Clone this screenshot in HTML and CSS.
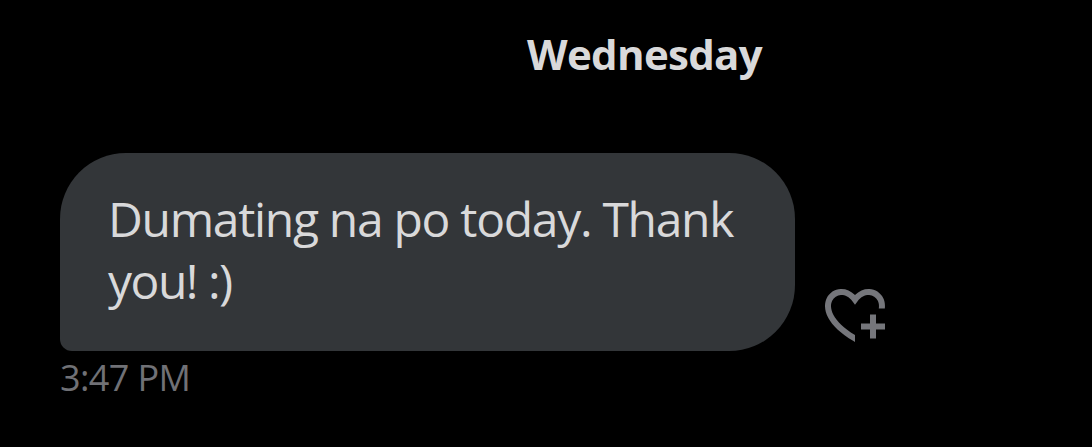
FILE: index.html
```html
<!DOCTYPE html>
<html lang="fil">
<head>
    <meta charset="UTF-8">
    <meta name="viewport" content="width=device-width, initial-scale=1.0">
    <title>Messages</title>
    <link rel="stylesheet" href="styles.css">
</head>
<body>
    <main class="conversation">
        <h2 class="day">Wednesday</h2>
        <div class="message-row">
            <div class="bubble">
                <p class="message">Dumating na po today. Thank<br><span class="ending">you! :)</span></p>
            </div>
            <button class="react" aria-label="Add reaction">
                <svg viewBox="2 3.5 20 18" width="60" height="54" fill="currentColor">
                    <path d="M17 12v3h-2.998v2h3v3h2v-3h3v-2h-3.001v-3H17zm-5 6.839c-3.871-2.34-6.053-4.639-7.127-6.609-1.112-2.04-1.031-3.7-.479-4.82.561-1.13 1.667-1.84 2.91-1.91 1.222-.06 2.68.51 3.892 2.16l.806 1.09.805-1.09c1.211-1.65 2.668-2.22 3.89-2.16 1.242.07 2.347.78 2.908 1.91.334.677.49 1.554.321 2.59h2.011c.153-1.283-.039-2.469-.539-3.48-.887-1.79-2.647-2.91-4.601-3.01-1.65-.09-3.367.56-4.796 2.01-1.43-1.45-3.147-2.1-4.798-2.01-1.954.1-3.714 1.22-4.601 3.01-.896 1.81-.846 4.17.514 6.67 1.353 2.48 4.003 5.12 8.382 7.67l.502.299v-2.32z"/>
                </svg>
            </button>
        </div>
        <div class="time">3:47 PM</div>
    </main>
</body>
</html>
```

FILE: styles.css
```css
body {
    margin: 0;
    background-color: #000;
    color: #d9d9da;
    font-family: "Open Sans", "Noto Sans", sans-serif;
}

.conversation {
    height: 447px;
    box-sizing: border-box;
    padding: 29px 60px 0;
    overflow: hidden;
}

.day {
    margin: 0 0 74px;
    padding-left: 197px;
    height: 50px;
    line-height: 50px;
    text-align: center;
    font-size: 42px;
    font-weight: 700;
    letter-spacing: -0.7px;
}

.message-row {
    display: flex;
    align-items: flex-end;
    gap: 30px;
}

.bubble {
    box-sizing: border-box;
    width: 735px;
    height: 198px;
    padding: 35px 48px;
    border-radius: 66px 66px 66px 12px;
    background-color: #333639;
}

.message {
    margin: 0;
    font-size: 48px;
    font-weight: 440;
    line-height: 62px;
    letter-spacing: -1.3px;
    white-space: nowrap;
}

.ending {
    letter-spacing: -1.5px;
}

.react {
    margin: 0 0 8px;
    padding: 0;
    border: 0;
    background: none;
    color: #75767b;
}

.react svg {
    display: block;
}

.time {
    height: 54px;
    line-height: 54px;
    font-size: 36px;
    letter-spacing: -0.6px;
    color: #707176;
}
```
